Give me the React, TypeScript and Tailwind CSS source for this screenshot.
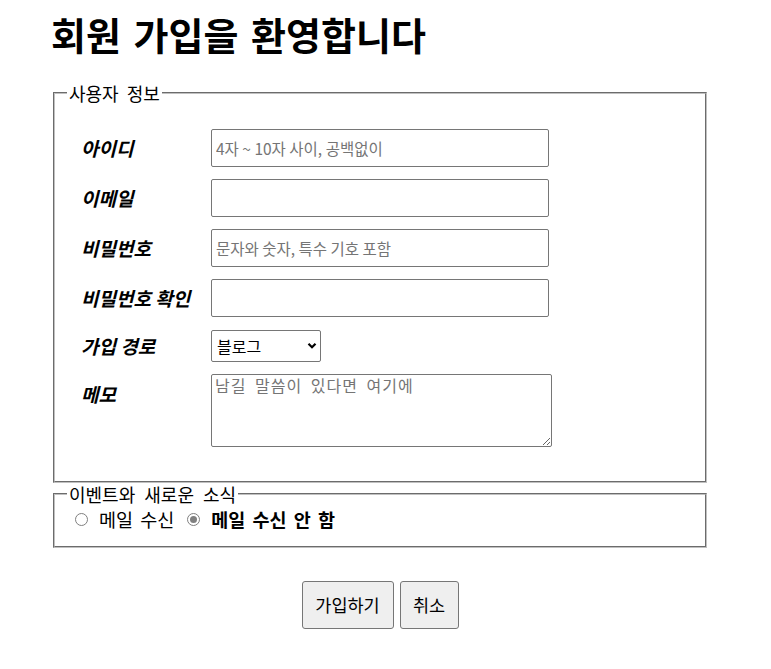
import React from 'react';

const font = { fontFamily: '"Noto Sans CJK KR", "Noto Sans", sans-serif' };

const rows = [
    { label: '아이디', placeholder: '4자 ~ 10자 사이, 공백없이' },
    { label: '이메일', placeholder: '' },
    { label: '비밀번호', placeholder: '문자와 숫자, 특수 기호 포함' },
    { label: '비밀번호 확인', placeholder: '' },
];

const Radio: React.FC<{ checked?: boolean }> = ({ checked }) => (
    <span className="inline-flex items-center justify-center w-[13px] h-[13px] rounded-full border border-[#808080] bg-white mr-[11px]">
        {checked && <span className="w-[7px] h-[7px] rounded-full bg-[#808080]" />}
    </span>
);

export default function App() {
    return (
        <div className="min-h-screen bg-white text-black" style={font}>
            <div className="ml-[51px] w-[658px] pt-[8px]">
                <h1 className="text-[38px] font-bold leading-[52px] [word-spacing:4px]">회원 가입을 환영합니다</h1>

                <form className="mt-[22px]">
                    <fieldset className="mx-[2px] border-2 [border-style:groove] border-[#c0c0c0] px-[12px] pb-[34px]">
                        <legend className="px-[2px] text-[18px] leading-[22px] [word-spacing:4px]">사용자 정보</legend>
                        <div className="pl-[14px] pt-[25px] flex flex-col gap-[12px]">
                            {rows.map(r => (
                                <div key={r.label} className="flex items-center">
                                    <label className="w-[130px] text-[19px] font-bold italic">{r.label}</label>
                                    <input
                                        placeholder={r.placeholder}
                                        className="w-[338px] h-[38px] border border-[#767676] rounded-[2px] px-[4px] text-[15.5px] placeholder:text-[#757575] outline-none"
                                    />
                                </div>
                            ))}
                            <div className="flex items-center mt-[1px]">
                                <label className="w-[130px] text-[19px] font-bold italic">가입 경로</label>
                                <div className="relative w-[110px] h-[32px]">
                                    <select className="appearance-none w-full h-full border border-[#767676] rounded-[2px] pl-[5px] text-[16px] bg-white outline-none">
                                        <option>블로그</option>
                                        <option>검색</option>
                                        <option>지인 소개</option>
                                    </select>
                                    <svg className="absolute right-[4px] top-[12px] pointer-events-none" width="10" height="8" viewBox="0 0 10 8">
                                        <path d="M1.5 1.8 L5 5.3 L8.5 1.8" fill="none" stroke="#000" strokeWidth="2.2" />
                                    </svg>
                                </div>
                            </div>
                            <div className="flex items-start">
                                <label className="w-[130px] pt-[6px] text-[19px] font-bold italic">메모</label>
                                <textarea
                                    placeholder="남길 말씀이 있다면 여기에"
                                    className="w-[341px] h-[73px] border border-[#767676] rounded-[2px] px-[3px] py-0 text-[16px] leading-[20px] tracking-[1px] [word-spacing:4px] placeholder:text-[#757575] outline-none resize"
                                />
                            </div>
                        </div>
                    </fieldset>

                    <fieldset className="mx-[2px] border-2 [border-style:groove] border-[#c0c0c0] px-[12px] pb-[12px]">
                        <legend className="px-[2px] text-[18px] leading-[22px] [word-spacing:5px]">이벤트와 새로운 소식</legend>
                        <div className="flex items-center text-[18.5px] pl-[8px] pt-[1px] [word-spacing:3px]">
                            <label className="flex items-center mr-[13px]"><Radio />메일 수신</label>
                            <label className="flex items-center font-bold"><Radio checked />메일 수신 안 함</label>
                        </div>
                    </fieldset>

                    <div className="flex justify-center gap-[6px] mt-[33px]">
                        <button type="button" className="w-[92px] h-[48px] bg-[#efefef] border border-[#767676] rounded-[3px] text-[17.5px]">가입하기</button>
                        <button type="button" className="w-[59px] h-[48px] bg-[#efefef] border border-[#767676] rounded-[3px] text-[17.5px]">취소</button>
                    </div>
                </form>
            </div>
        </div>
    );
}
